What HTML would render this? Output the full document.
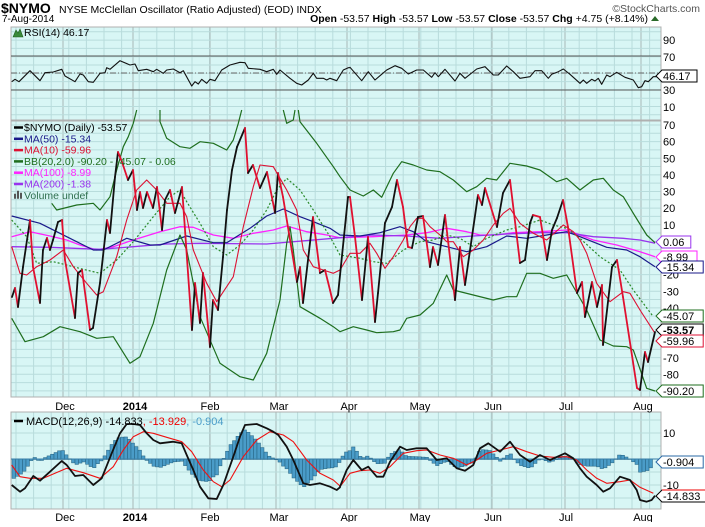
<!DOCTYPE html>
<html><head><meta charset="utf-8"><style>
body{margin:0;background:#fff;width:705px;height:522px;overflow:hidden;font-family:"Liberation Sans",sans-serif}
</style></head><body>
<svg id="s" width="705" height="522" xmlns="http://www.w3.org/2000/svg" font-family="Liberation Sans, sans-serif">
<rect width="705" height="522" fill="#fff"/>
<text x="1" y="13" font-size="14" font-weight="bold">$NYMO</text>
<text x="59" y="13" font-size="10.5">NYSE McClellan Oscillator (Ratio Adjusted) (EOD)  INDX</text>
<text x="700" y="12" font-size="10.5" fill="#555" text-anchor="end">©StockCharts.com</text>
<text x="2" y="22" font-size="10">7-Aug-2014</text>
<text x="648" y="22" font-size="10.5" text-anchor="end"><tspan font-weight="bold">Open</tspan> -53.57 <tspan font-weight="bold">High</tspan> -53.57 <tspan font-weight="bold">Low</tspan> -53.57 <tspan font-weight="bold">Close</tspan> -53.57 <tspan font-weight="bold">Chg</tspan> +4.75 (+8.14%)</text>
<path d="M651 21 l4 -5 l4 5z" fill="#2a6a2a"/>
<g id="g"></g>
</svg>
<script>
var NS="http://www.w3.org/2000/svg",G=document.getElementById('g');
function el(t,a,txt){var e=document.createElementNS(NS,t);for(var k in a)e.setAttribute(k,a[k]);if(txt!==undefined)e.textContent=txt;G.appendChild(e);return e;}
var L=11,R=661;
var months=[63,133,210,276,347,419,492,565,641];
function panel(t,b,hs){
 el('rect',{x:L,y:t,width:R-L,height:b-t,fill:'#d8f6f5'});
 for(var x=L+5;x<R;x+=17.6)el('line',{x1:x,y1:t,x2:x,y2:b,stroke:'#b8dcdc','stroke-width':1});
 months.forEach(function(x){el('line',{x1:x,y1:t,x2:x,y2:b,stroke:'#a8b8b8','stroke-width':1});});
 hs.forEach(function(y){el('line',{x1:L,y1:y,x2:R,y2:y,stroke:'#b8dcdc','stroke-width':1});});
 el('rect',{x:L,y:t,width:R-L,height:b-t,fill:'none',stroke:'#b0b0b0','stroke-width':1});
}
function range(a,b,s){var r=[];for(var v=a;v<=b+1e-6;v+=s)r.push(v);return r;}
panel(27,120,range(27+4.8,120,8.3));
el('line',{x1:L,y1:56,x2:R,y2:56,stroke:'#555','stroke-width':1});
el('line',{x1:L,y1:90,x2:R,y2:90,stroke:'#555','stroke-width':1});
el('line',{x1:L,y1:73,x2:R,y2:73,stroke:'#666','stroke-width':1,'stroke-dasharray':'6,2,1,2'});
panel(121,397,range(125,397,8.31));
panel(412,509,range(420,509,13));
function pts(arr,ox,oy,maxzx){var s=[];for(var i=0;i<arr.length;i+=2){if(maxzx&&arr[i]>maxzx)continue;s.push((ox+arr[i]/3).toFixed(1)+','+(oy+arr[i+1]/3).toFixed(1));}return s.join(' ');}
function pl(p,c,w,extra){var a={points:p,fill:'none',stroke:c,'stroke-width':w,'stroke-linejoin':'round'};for(var k in extra)a[k]=extra[k];el('polyline',a);}
var r1=[35,185,45,178,57,185,90,152,120,182,135,158,160,156,185,148,195,168,225,185,240,162,250,165,265,185,280,187,300,160,315,158,320,143,330,148,360,122,390,135,405,132,415,152,440,148,460,155,470,148,490,160,500,150,520,147,540,158,550,152,575,198,585,185,595,192,605,178,620,190,630,178,645,182,665,150,690,135,720,127,735,128,745,145,780,148,800,155,820,148,830,163,840,150,870,175,890,190,905,195,925,180,940,160,950,175,970,175,980,180,990,175,1010,182,1030,150,1045,143,1050,143];
var r2=[0,142,35,182,55,155,75,180,110,150,135,137,155,145,175,162,200,150,220,150,245,172,255,158,265,170,285,148,315,183,330,160,345,175,380,147,405,140,430,165,445,165,470,138,490,155,510,175,540,170,555,152,575,152,595,175,605,163,625,155,640,147,660,163,690,190,700,180,710,190,725,178,735,183,745,175,755,193,770,165,780,170,800,157,825,172,850,180,865,203,875,200,885,182,895,185,910,170,920,170];
pl(pts(r1,0,20)+' '+pts(r2,350,20),'#111',1.1);
function two(a,b){return pts(a,0,110,1018)+' '+pts(b,340,110);}
pl(two([35,380,90,365,150,378,200,390,240,405,290,420,340,410,400,390,480,365,540,350,580,352,640,375,700,385,760,370,820,360,860,348,920,365,980,375,1040,380],[0,383,100,380,200,375,260,368,320,355,380,365,420,375,470,375,520,368,600,365,680,360,720,375,760,390,830,405,900,425,945,440]),'#ff22ff',1.3);
pl(two([35,410,150,412,300,418,400,410,500,402,600,400,800,402,1000,385,1080,378],[0,383,100,375,200,378,300,385,400,378,500,372,600,368,680,368,760,380,850,385,900,390,945,400]),'#9933ee',1.3);
pl(two([35,318,120,340,200,380,280,420,310,420,380,385,450,405,480,405,560,378,640,398,680,398,750,355,800,318,850,297,900,320,940,335,990,355,1030,373,1060,375],[0,375,60,378,120,368,180,350,220,365,260,395,320,410,380,425,440,410,500,378,560,385,620,375,680,365,720,380,800,412,860,420,900,440,945,470]),'#1a1a8a',1.2);
pl(pts([155,280,170,300,230,285,280,280,300,300,330,260,350,180,370,110,385,80,400,40,410,0],0,110),'#1e6e1e',1.2);
pl(pts([480,0,480,35,500,85,540,110,570,115,600,95,640,100,680,120,700,90,715,40,725,0],0,110),'#1e6e1e',1.2);
pl(pts([850,0,860,40,880,30,885,0],0,110),'#1e6e1e',1.2);
pl(two([895,0,900,35,950,100,1000,170,1030,205,1080,210],[0,200,30,240,70,258,100,240,125,262,160,190,185,155,220,165,260,180,300,185,340,210,380,245,410,230,440,205,470,210,510,160,560,168,600,180,650,215,680,205,720,240,760,210,790,205,820,240,850,260,880,310,920,375,945,398]),'#1e6e1e',1.2);
pl(two([35,625,75,695,130,680,180,650,240,665,290,685,340,680,390,760,420,740,460,640,500,480,540,375,560,420,600,620,660,760,720,800,760,810,800,730,840,570,860,400,870,350,880,420,900,590,960,625,1000,650,1040,655,1080,650],[0,665,40,650,80,660,110,668,160,665,180,660,200,625,240,615,280,580,320,495,340,540,400,555,460,570,500,560,530,560,560,490,600,490,640,505,680,495,740,600,780,690,820,708,860,710,880,720,920,835,945,843]),'#1e6e1e',1.2);
pl(two([35,330,80,380,110,460,160,455,200,465,250,478,300,490,350,450,400,395,460,320,510,260,540,240,560,275,600,340,640,410,680,435,720,405,760,360,800,300,830,240,860,205,900,240,940,300,990,380,1030,430,1080,440],[0,435,60,445,100,455,140,460,190,420,240,395,280,390,320,375,360,385,400,410,440,385,500,360,540,350,600,330,640,345,680,355,720,385,780,440,840,480,880,540,940,620]),'#2a8a2a',1.2,{'stroke-dasharray':'2,2'});
pl(two([35,410,60,490,80,495,110,470,150,450,190,420,220,470,260,520,290,555,310,545,350,440,380,330,410,240,440,210,470,240,500,280,540,280,560,320,580,420,620,520,650,575,700,500,730,350,760,230,780,165,820,170,860,240,890,300,910,420,940,470,970,480,1000,490,1030,470,1050,430,1080,425],[0,480,30,430,60,430,90,400,110,430,135,475,160,440,190,390,210,350,230,325,250,325,270,350,300,375,320,395,340,395,370,440,400,420,430,390,460,345,490,310,510,295,540,340,580,370,620,390,670,345,700,365,720,390,740,430,770,520,810,575,850,545,870,550,900,600,945,670]),'#dd1133',1.1);
var P=[12,297,15,288,18,307,23,267,30,220,33,267,40,303,43,250,47,238,50,250,53,240,58,222,62,220,65,260,75,318,78,273,82,270,90,330,93,328,100,283,107,220,110,233,115,177,118,152,122,162,128,180,133,170,137,210,140,192,143,208,147,192,153,208,157,187,162,230,165,200,170,190,175,213,182,187,192,330,195,283,200,323,203,273,210,347,213,300,218,310,223,257,227,210,232,170,237,147,245,128,248,173,253,165,260,188,267,172,275,213,278,173,283,197,297,282,300,267,303,303,313,217,320,273,325,270,330,290,333,303,338,295,348,197,350,197,355,237,362,300,368,237,375,322,378,293,385,223,392,207,397,180,403,207,408,247,412,248,418,217,423,216,430,267,433,247,438,265,445,215,455,300,460,247,465,285,478,195,482,205,485,188,497,227,503,193,510,180,520,263,525,260,530,223,533,215,540,217,547,260,552,230,557,218,563,200,568,227,577,293,582,282,585,317,592,282,597,307,602,285,603,345,612,267,617,260,623,297,637,388,640,390,645,352,648,362,655,332];
for(var i=0;i<P.length-2;i+=2){var dn=P[i+3]>P[i+1];el('line',{x1:P[i],y1:P[i+1],x2:P[i+2],y2:P[i+3],stroke:dn?'#e01030':'#111','stroke-width':1.8,'stroke-linecap':'round'});}
var M1=[35,255,60,275,75,265,100,228,120,242,150,215,185,183,200,195,225,228,250,225,280,255,305,235,335,160,360,100,380,70,400,65,420,75,440,100,460,120,480,130,520,125,545,130,560,165,580,210,600,260,625,295,650,297,670,255,700,170,720,110,735,75,770,65,800,85,820,95,835,105,860,140,880,180,910,250,930,255,960,250,990,260,1010,270,1020,262];
var M2=[0,260,20,210,40,180,65,210,85,200,110,230,130,230,150,185,180,140,200,150,230,145,260,145,290,180,320,175,350,205,375,212,400,195,420,145,445,130,480,155,510,125,540,165,570,185,600,165,630,180,675,160,700,175,720,205,740,230,770,255,790,275,810,265,840,230,870,240,890,270,900,300,920,305,935,300,945,287];
var S1=[35,195,60,230,90,235,130,235,200,205,250,218,300,235,340,200,370,150,400,110,430,95,460,100,500,112,545,125,575,155,610,210,640,245,665,260,690,240,730,170,770,120,810,95,850,105,880,125,920,180,960,220,1000,240,1020,258];
var S2=[0,260,30,220,60,212,90,210,120,220,150,200,190,160,230,152,260,150,300,165,340,175,380,195,410,180,440,160,480,150,520,140,560,155,600,168,640,172,680,170,710,180,740,210,770,235,800,250,840,245,870,240,900,262,940,280];
function conv(a,ox,oy){var r=[];for(var i=0;i<a.length;i+=2)r.push([ox+a[i]/3,oy+a[i+1]/3]);return r;}
var mm=conv(M1,0,400).concat(conv(M2,340,400)),ss=conv(S1,0,400).concat(conv(S2,340,400));
function interp(a,x){for(var i=0;i<a.length-1;i++){if(x>=a[i][0]&&x<=a[i+1][0]){var t=(x-a[i][0])/((a[i+1][0]-a[i][0])||1);return a[i][1]+t*(a[i+1][1]-a[i][1]);}}return null;}
for(var x=12;x<656;x+=3.5){var a=interp(mm,x+1.5),b=interp(ss,x+1.5);if(a==null||b==null)continue;var h=(a-b)*1.0;var y0=459,y1=459+h;el('rect',{x:x,y:Math.min(y0,y1),width:3.5,height:Math.abs(h)+0.5,fill:'#4a9cc8',stroke:'#22607e','stroke-width':0.5});}
el('line',{x1:L,y1:459,x2:R,y2:459,stroke:'#3a7ea6','stroke-width':1});
pl(ss.map(function(p){return p[0].toFixed(1)+','+p[1].toFixed(1)}).join(' '),'#ee1111',1.1);
pl(mm.map(function(p){return p[0].toFixed(1)+','+Math.max(p[1],424).toFixed(1)}).join(' '),'#111',1.8);
var lg=[['$NYMO (Daily) -53.57','#000'],['MA(50) -15.34','#1a1a8a'],['MA(10) -59.96','#dd1133'],['BB(20,2.0) -90.20 - -45.07 - 0.06','#1e6e1e'],['MA(100) -8.99','#ff22ff'],['MA(200) -1.38','#9933ee'],['Volume undef','#2e6e4e']];
lg.forEach(function(l,i){var y=131+i*11.3;if(i<6)el('line',{x1:14,y1:y-3.5,x2:23,y2:y-3.5,stroke:l[1],'stroke-width':2.5});else{el('path',{d:'M14 '+(y)+'v-5h2v5zM17 '+y+'v-8h2v8zM20 '+y+'v-6h2v6z',fill:'#555'});}el('text',{x:24,y:y,'font-size':10.5,fill:l[1]},l[0]);});
el('text',{x:24,y:36,'font-size':10.5,fill:'#000'},'RSI(14) 46.17');
el('path',{d:'M13 37 l3 -7 l2 3 l2 -4 l3 8z',fill:'#3a8a3a',stroke:'#1e5e1e','stroke-width':0.6});
el('line',{x1:14,y1:421,x2:23,y2:421,stroke:'#000','stroke-width':2.5});
var t=el('text',{x:26,y:425,'font-size':11});
t.innerHTML='MACD(12,26,9) -14.833<tspan fill="#e00">, -13.929</tspan><tspan fill="#4a9cc8">, -0.904</tspan>';
function lab(x,y,s,b){el('text',{x:x,y:y,'font-size':11,'font-weight':b?'bold':'normal','text-anchor':'middle'},s);}
[[65,'Dec'],[135,'2014',1],[210,'Feb'],[279,'Mar'],[349,'Apr'],[420,'May'],[493,'Jun'],[566,'Jul'],[643,'Aug']].forEach(function(m){lab(m[0],410,m[1],m[2]);lab(m[0],521,m[1],m[2]);});
function rl(y,s){el('text',{x:663,y:y+4,'font-size':11},s);}
rl(40,'90');rl(57,'70');rl(90,'30');rl(107,'10');
for(var v=70;v>=-90;v-=10){var y=241.4-v*1.6625;if([0,-10,-50,-60,-90].indexOf(v)>=0)continue;rl(y,String(v));}
rl(433,'10');rl(485,'-10');
function tag(y,s,c,b){el('path',{d:'M656 '+y+' l6 -6 h'+(s.length*6.2+4)+' v12 h-'+(s.length*6.2+4)+'z',fill:'#fff',stroke:c,'stroke-width':1});el('text',{x:663,y:y+4,'font-size':11,'font-weight':b?'bold':'normal'},s);}
tag(76,'46.17','#000');
tag(242,'0.06','#9933ee');tag(257,'-8.99','#ff22ff');tag(267,'-15.34','#1a1a8a');
tag(316,'-45.07','#1e6e1e');tag(330,'-53.57','#000',1);tag(341,'-59.96','#dd1133');tag(391,'-90.20','#1e6e1e');
tag(462,'-0.904','#2a6aa6');tag(496,'-14.833','#000');
el('line',{x1:662,y1:490,x2:705,y2:490,stroke:'#e00','stroke-width':1});
</script>
</body></html>
